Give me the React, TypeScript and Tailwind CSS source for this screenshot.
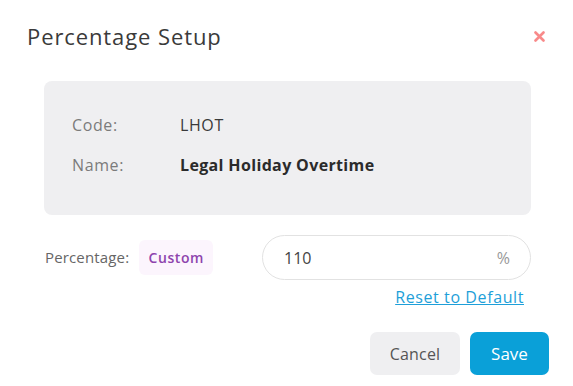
import React, { useState } from 'react';

const font = { fontFamily: '"Open Sans", "Noto Sans", sans-serif' };

const App: React.FC = () => {
  const [value, setValue] = useState('110');

  return (
    <div className="w-[573px] h-[386px] bg-white font-['Open_Sans',sans-serif] text-[#333]">
      {/* Header */}
      <div className="flex items-center justify-between h-[73px] pl-[27px] pr-[27px]">
        <h2 className="text-[22px] font-medium text-[#3a3a3a] tracking-[0.9px]">Percentage Setup</h2>
        <button className="text-[#f88a8a] w-[14px] h-[14px] flex items-center justify-center">
          <svg width="11" height="11" viewBox="0 0 11 11">
            <path d="M1.5 1.5 L9.5 9.5 M9.5 1.5 L1.5 9.5" stroke="currentColor" strokeWidth="2.6" strokeLinecap="round" />
          </svg>
        </button>
      </div>

      {/* Info box */}
      <div className="mt-[8px] ml-[44px] mr-[42px] rounded-[8px] bg-[#efeff1] pl-[28px] pt-[34px] pb-[40px] flex flex-col gap-[20px]">
        <div className="flex items-center h-[20px] text-[16px] tracking-[0.6px]">
          <span className="w-[108px] text-[#7b7b7b]">Code:</span>
          <span className="text-[#3a3a3a]">LHOT</span>
        </div>
        <div className="flex items-center h-[20px] text-[16px]">
          <span className="w-[108px] text-[#7b7b7b] tracking-[0.6px]">Name:</span>
          <span className="font-bold text-[#2b2b2b] tracking-[0.35px]">Legal Holiday Overtime</span>
        </div>
      </div>

      {/* Percentage row */}
      <div className="mt-[20px] ml-[45px] mr-[42px] flex items-center">
        <span className="text-[15px] text-[#666] tracking-[0.15px]">Percentage:</span>
        <span className="ml-[10px] h-[35px] w-[74px] rounded-[6px] bg-[#fcf5fd] text-[#8e44ad] text-[14px] font-semibold tracking-[0.6px] flex items-center justify-center">
          Custom
        </span>
        <div className="ml-auto w-[269px] h-[45px] rounded-full border border-[#e2e2e2] flex items-center pl-[21px] pr-[20px]">
          <input
            value={value}
            onChange={(e) => setValue(e.target.value)}
            className="flex-1 min-w-0 outline-none text-[16px] text-[#444] bg-transparent"
            style={font}
          />
          <span className="text-[16px] text-[#999]">%</span>
        </div>
      </div>

      <div className="mt-[9px] pr-[49px] flex justify-end">
        <a href="#" className="text-[16px] text-[#1e9fd9] underline leading-[16px] tracking-[0.6px]">Reset to Default</a>
      </div>

      {/* Footer */}
      <div className="mt-[27px] pr-[24px] flex justify-end gap-[10px]">
        <button className="w-[90px] h-[43px] rounded-[7px] bg-[#efeff1] text-[16px] text-[#555] tracking-[0.2px]">Cancel</button>
        <button className="w-[79px] h-[43px] rounded-[7px] bg-[#0aa0d8] text-[17px] font-medium text-white">Save</button>
      </div>
    </div>
  );
};

export default App;
